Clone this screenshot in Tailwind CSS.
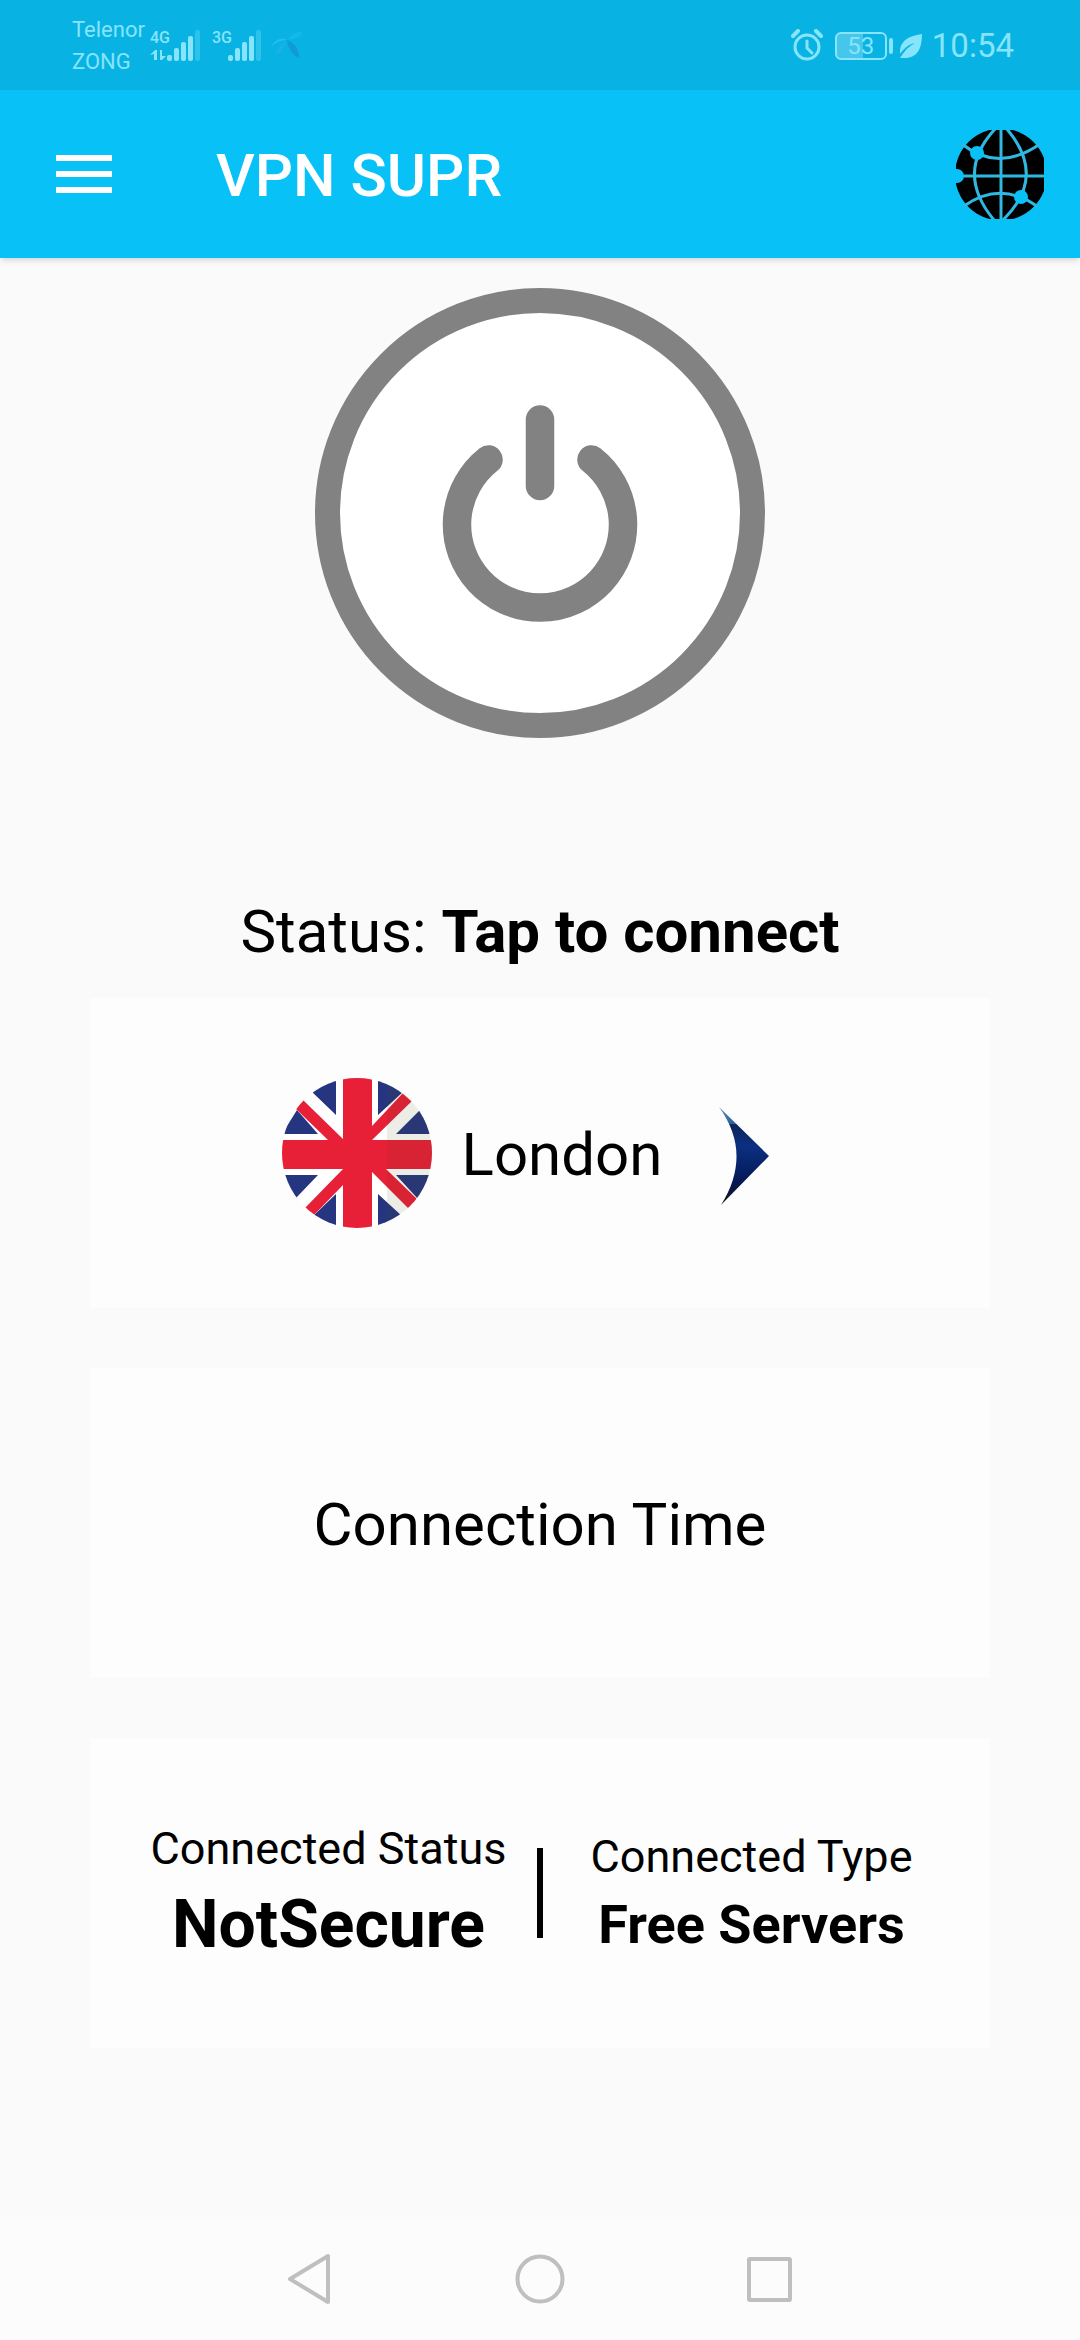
<!DOCTYPE html>
<html lang="en">
  <head>
    <meta charset="UTF-8" />
    <meta name="viewport" content="width=device-width, initial-scale=1.0" />
    <title>VPN SUPR</title>
    <script src="https://cdn.jsdelivr.net/npm/@tailwindcss/browser@4"></script>
  </head>
  <body class="min-h-screen flex flex-col bg-[#fafafa] text-black font-['Roboto',sans-serif]">
    <!-- Status bar -->
    <div class="h-[90px] pt-[2px] pl-[72px] pr-[66px] flex items-center justify-between bg-[#08b3e3] text-[#86e4fb]">
      <div class="flex items-center">
        <div class="w-[78px] text-[22px] leading-8">
          <p>Telenor</p>
          <p>ZONG</p>
        </div>
        <svg class="w-[62px] h-[34px]" viewBox="0 0 62 34" fill="currentColor">
          <text x="0" y="14" font-size="16" font-weight="500">4G</text>
          <path d="M0 26l5-5h2v10H4v-6zM10 21h2v6h4l-4 4h-2z" />
          <rect x="17" y="26" width="5" height="6" rx="2" />
          <rect x="24" y="19" width="5" height="13" rx="2" />
          <rect x="31" y="13" width="5" height="19" rx="2" />
          <rect x="38" y="7" width="5" height="25" rx="2" />
          <rect x="45" y="1" width="5" height="31" rx="2" opacity=".3" />
        </svg>
        <svg class="w-[58px] h-[34px]" viewBox="0 0 58 34" fill="currentColor">
          <text x="0" y="14" font-size="16" font-weight="500">3G</text>
          <rect x="16" y="26" width="5" height="6" rx="2" />
          <rect x="23" y="19" width="5" height="13" rx="2" />
          <rect x="30" y="13" width="5" height="19" rx="2" />
          <rect x="37" y="7" width="5" height="25" rx="2" />
          <rect x="44" y="1" width="5" height="31" rx="2" opacity=".3" />
        </svg>
        <svg class="w-[34px] h-[34px]" viewBox="0 0 34 34" fill="none">
          <path d="M1 18C4 11 12 8 17 11C11 11 5 14 1 18z" fill="#25bdf0" />
          <path d="M17 11C18 18 22 27 29 29C30 22 25 14 17 11z" fill="#109bd8" />
          <path d="M16 12C11 14 6 20 5 26C11 24 15 18 16 12z" fill="#1cb0e8" />
          <path d="M18 10C22 5 28 2 32 3C31 8 24 11 18 10z" fill="#10b9ee" />
        </svg>
      </div>
      <div class="flex items-center">
        <svg class="w-[32px] h-[34px]" viewBox="0 0 32 34" fill="none" stroke="currentColor" stroke-width="3" stroke-linecap="round">
          <circle cx="16" cy="18" r="12" />
          <path d="M2 7l5-5M30 7l-5-5" stroke-width="4" />
          <path d="M16 12v7l5 5" />
        </svg>
        <div class="ml-3 w-[52px] h-[28px] rounded-md border-2 border-current flex items-center justify-center text-[24px] leading-none bg-linear-to-r from-white/25 from-55% to-transparent to-55%">53</div>
        <div class="ml-[2px] w-1 h-4 rounded-full bg-current"></div>
        <svg class="ml-[6px] w-[24px] h-[26px]" viewBox="0 0 24 26" fill="currentColor">
          <path d="M23 1C8 3 0 9 1 21C6 14 11 11 16 10C10 13 5 18 1 25L4 25C18 26 23 16 23 1z" />
        </svg>
        <span class="ml-[9px] text-[33px] leading-10">10:54</span>
      </div>
    </div>

    <!-- App bar -->
    <header class="h-[168px] pl-14 pr-9 flex items-center bg-[#08c1f7] shadow-md">
      <button type="button" aria-label="Menu" class="w-14 h-[38px] flex flex-col justify-between">
        <span class="w-full h-[6px] bg-white"></span>
        <span class="w-full h-[6px] bg-white"></span>
        <span class="w-full h-[6px] bg-white"></span>
      </button>
      <h1 class="ml-[104px] pt-1 flex-1 text-[60px] leading-[72px] font-medium text-white">VPN SUPR</h1>
      <button type="button" aria-label="Servers">
        <svg class="w-[88px] h-[89px]" viewBox="0 0 88 89" fill="none">
          <circle cx="45" cy="44.5" r="46" fill="#000" />
          <g stroke="#2fb9e0" stroke-width="3">
            <path d="M45 0v89M0 46h88" />
            <path d="M40 -2Q-2 42 38 90" />
            <path d="M50 -2Q92 46 47 90" />
            <path d="M6 14Q42 43 84 14" />
            <path d="M8 76Q45 50 82 77" />
          </g>
          <g fill="#08c1f7">
            <circle cx="21" cy="23" r="7" />
            <circle cx="65" cy="67" r="7" />
            <circle cx="1" cy="46" r="7" />
          </g>
        </svg>
      </button>
    </header>

    <main class="flex-1 px-[90px] pt-[30px] flex flex-col items-center">
      <!-- Power button -->
      <button type="button" aria-label="Connect" class="rounded-full">
        <svg class="w-[450px] h-[450px]" viewBox="0 0 450 450" fill="none" stroke="#828282">
          <circle cx="225" cy="225" r="212.5" fill="#fff" stroke-width="25" />
          <path d="M225 131.500V198M173.500 171.500A83 83 0 1 0 276.500 171.500" stroke-width="28.500" stroke-linecap="round" />
        </svg>
      </button>

      <p class="mt-[154px] text-[60px] leading-[80px]">Status: <b>Tap to connect</b></p>

      <div class="w-full mt-[26px] flex flex-col gap-[60px]">
        <!-- Selected server -->
        <button type="button" class="h-[310px] flex items-center justify-center gap-[30px] bg-[#fdfdfd]">
          <svg class="w-[150px] h-[150px]" viewBox="0 0 150 150">
            <clipPath id="flag"><circle cx="75" cy="75" r="75" /></clipPath>
            <g clip-path="url(#flag)">
              <rect width="150" height="150" fill="#fff" />
              <path fill="#26357f" d="M54 0v37L28 12zM15 32L36 56H0zM96 0v37L122 13zM138 32L114 56H150zM0 97H36L13 121zM54 116V150L30 139zM114 97H150L136 121zM96 116L121 139L96 150z" />
              <path fill="#e71f37" d="M61 0H90V48L122 14L130 23L90 62H150V91H104L136 122L127 131L90 94V150H61V107L31 138L23 130L61 91H0V62H46L14 31L21 22L61 61z" />
              <rect x="105" width="45" height="150" fill="#4a4a20" opacity=".1" />
            </g>
          </svg>
          <span class="pt-1 text-[60px] leading-[80px]">London</span>
          <svg class="w-[106px] h-[106px]" viewBox="0 0 106 106">
            <linearGradient id="arrow" x1="0" y1="0" x2="0" y2="1">
              <stop offset="0" stop-color="#5b93bd" />
              <stop offset=".17" stop-color="#2b5f96" />
              <stop offset=".18" stop-color="#0a2558" />
              <stop offset=".4" stop-color="#0b3080" />
              <stop offset=".75" stop-color="#041858" />
              <stop offset="1" stop-color="#14141c" />
            </linearGradient>
            <path d="M27 7L77 56L29 105Q61 54 27 7z" fill="url(#arrow)" />
          </svg>
        </button>

        <!-- Connection time -->
        <section class="h-[310px] flex items-center justify-center bg-[#fdfdfd]">
          <h2 class="pt-1 text-[60px] leading-[80px]">Connection Time</h2>
        </section>

        <!-- Connection details -->
        <section class="h-[310px] px-[30px] flex items-center text-center bg-[#fdfdfd]">
          <div class="flex-1">
            <p class="text-[45px] leading-[64px]">Connected Status</p>
            <p class="text-[66px] leading-[88px] font-bold">NotSecure</p>
          </div>
          <div class="w-[6px] h-[90px] bg-black"></div>
          <div class="flex-1">
            <p class="text-[45px] leading-[64px]">Connected Type</p>
            <p class="text-[54px] leading-[72px] font-bold">Free Servers</p>
          </div>
        </section>
      </div>
    </main>

    <!-- Navigation bar -->
    <nav class="h-[123px] flex items-center justify-center bg-[#fcfcfc] text-[#bfbfbf]">
      <button type="button" aria-label="Back" class="w-[230px] flex justify-center">
        <svg class="w-[52px] h-[52px]" viewBox="0 0 52 52" fill="none" stroke="currentColor" stroke-width="4" stroke-linejoin="round">
          <path d="M6 26L44 3V49z" />
        </svg>
      </button>
      <button type="button" aria-label="Home" class="w-[230px] flex justify-center">
        <svg class="w-[52px] h-[52px]" viewBox="0 0 52 52" fill="none" stroke="currentColor" stroke-width="4">
          <circle cx="26" cy="26" r="22.500" />
        </svg>
      </button>
      <button type="button" aria-label="Recents" class="w-[230px] flex justify-center">
        <svg class="w-[52px] h-[52px]" viewBox="0 0 52 52" fill="none" stroke="currentColor" stroke-width="4" stroke-linejoin="round">
          <rect x="5" y="6" width="41" height="41" rx="1" />
        </svg>
      </button>
    </nav>
  </body>
</html>
